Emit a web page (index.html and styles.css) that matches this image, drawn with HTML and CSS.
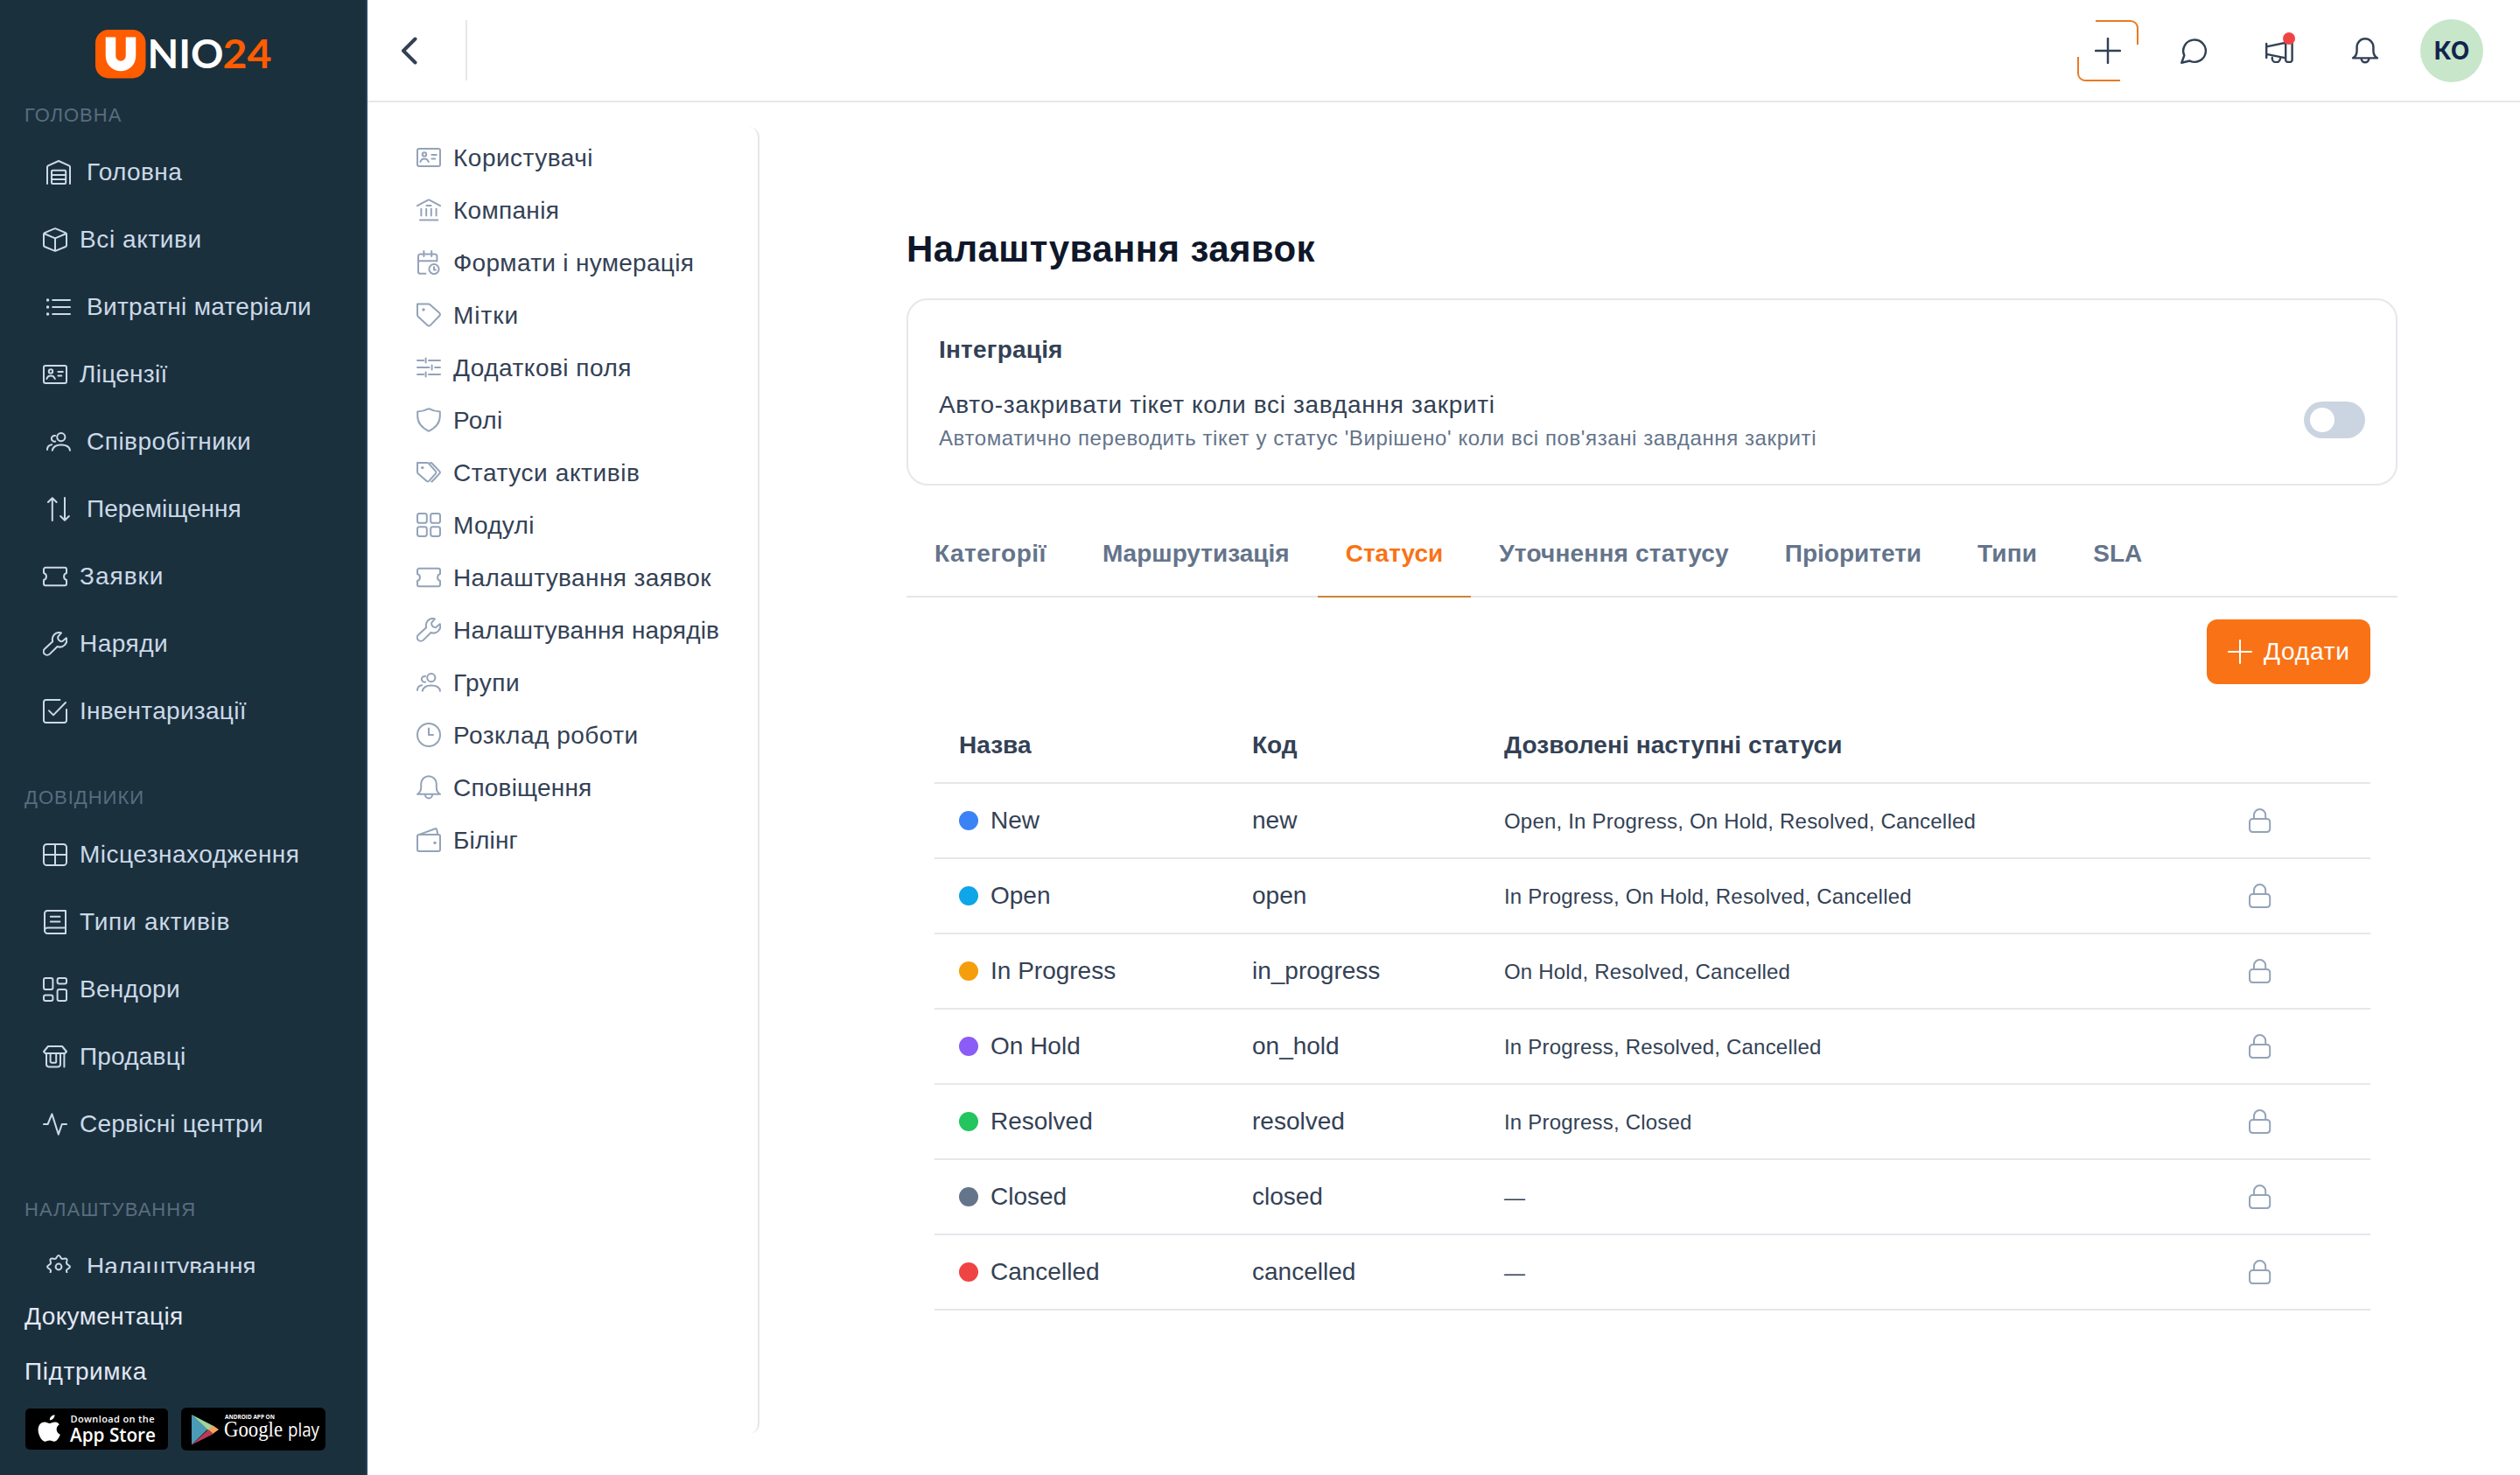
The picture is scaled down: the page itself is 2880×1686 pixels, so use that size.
FILE: index.html
```html
<!DOCTYPE html>
<html lang="uk">
<head>
<meta charset="utf-8">
<title>Налаштування заявок</title>
<link rel="stylesheet" href="styles.css">
</head>
<body>
<svg class="sprite" aria-hidden="true">
  <symbol id="warehouse" viewBox="0 0 14 14"><path d="M.5 13.5V4.1Q.5 3.5 1 3.2L7 .5l6 2.7q.5.3.5.9v9.4"/><rect x="3" y="5.9" width="8.1" height="7.6" rx=".6"/><path d="M3 8.5h8M3 11h8"/></symbol>
  <symbol id="box" viewBox="0 0 14 14"><path d="M7.4.7l5.6 2.4q.5.2.5.8v6.4q0 .5-.5.7l-5.6 2.3q-.4.2-.8 0L1 11q-.5-.2-.5-.7V3.9q0-.6.5-.8L6.6.7q.4-.2.8 0zM.7 3.5L7 6.2l6.3-2.7M7 6.2v7.1"/></symbol>
  <symbol id="list" viewBox="0 0 14 14"><path d="M3.6 3h9.9M3.6 7h9.9M3.6 11h9.9"/><path class="dots" d="M.8 3h.01M.8 7h.01M.8 11h.01"/></symbol>
  <symbol id="idcard" viewBox="0 0 14 14"><rect x=".5" y="2" width="13" height="10" rx="1"/><circle cx="4.5" cy="5.2" r="1.1"/><path d="M2.2 9.5q.5-1.8 2.3-1.8t2.4 1.8M8.7 5.5h2.7M8.7 7.8h1.9"/></symbol>
  <symbol id="users" viewBox="0 0 14 14"><circle cx="8.4" cy="4.3" r="2.3"/><path d="M3.4 11.9C3.8 9.8 5.5 8.7 8.4 8.7s4.8 1.1 5.1 3.2M5 3.5a1.7 1.7 0 1 0 .1 3.3M.5 11.5c0-1.7.9-2.6 2.6-2.9"/></symbol>
  <symbol id="arrows" viewBox="0 0 14 14"><path d="M3.4 13.5V.6M1 3L3.4.6 5.8 3M10.5.5v12.9M8.1 11l2.4 2.4 2.4-2.4"/></symbol>
  <symbol id="ticket" viewBox="0 0 14 14"><path d="M.5 5V2.9a1 1 0 0 1 1-1h11a1 1 0 0 1 1 1V5a2.1 2.1 0 0 0 0 4v2.1a1 1 0 0 1-1 1h-11a1 1 0 0 1-1-1V9a2.1 2.1 0 0 0 0-4z"/></symbol>
  <symbol id="wrench" viewBox="0 0 14 14"><path d="M10.5.7a3.9 3.9 0 0 0-4.9 4.9L1 9.9a2 2 0 0 0 2.9 2.9L8.3 8.5a3.9 3.9 0 0 0 5.1-4.9l-2.1 1.8q-1 .5-2-.4t-.6-2.2z"/></symbol>
  <symbol id="check" viewBox="0 0 14 14"><path d="M13.5 6v6.3a1.2 1.2 0 0 1-1.2 1.2H1.7a1.2 1.2 0 0 1-1.2-1.2V1.7A1.2 1.2 0 0 1 1.7.5h8M3.5 6.7L6 9.2l7-7.2"/></symbol>
  <symbol id="window" viewBox="0 0 14 14"><rect x=".5" y="1" width="13" height="12" rx="1.8"/><path d="M7 1v12M.5 7h13"/></symbol>
  <symbol id="book" viewBox="0 0 14 14"><path d="M13 13.5H2.6A1.6 1.6 0 0 1 1 11.9V2A1.5 1.5 0 0 1 2.5.5H13zM13 10.3H2.6A1.6 1.6 0 0 0 1 11.9M4.4 3.9h5.3M4.4 6.8h5.3"/></symbol>
  <symbol id="dashboard" viewBox="0 0 14 14"><rect x=".5" y=".5" width="5.2" height="6.5" rx="1"/><rect x="8.3" y=".5" width="5.2" height="3.3" rx="1"/><rect x=".5" y="10.2" width="5.2" height="3.3" rx="1"/><rect x="8.3" y="7" width="5.2" height="6.5" rx="1"/></symbol>
  <symbol id="store" viewBox="0 0 14 14"><path d="M3 1h8l2.500 3-.9 1H1.400L.5 4zM2 5v6.300a1.400 1.400 0 0 0 1.400 1.400h5.200a1.400 1.400 0 0 0 1.400-1.400V5M12.200 5v7.700M4.300 5v4.600a.8.8 0 0 0 .8.8h1.700a.8.8 0 0 0 .8-.8V5"/></symbol>
  <symbol id="pulse" viewBox="0 0 14 14"><path d="M.5 7h2.300L5.200 1.200l3.700 11.600L10.900 7h2.600"/></symbol>
  <symbol id="gear" viewBox="0 0 14 14"><g transform="translate(7 7)"><path d="M5.49-1.09Q7.5 0 5.49 1.09Q4.07 1.68 4.66 3.11Q5.2 5.2 3.11 4.66Q1.68 4.07 1.09 5.49Q0 7.5-1.09 5.49Q-1.68 4.07-3.11 4.66Q-5.2 5.2-4.66 3.11Q-4.07 1.68-5.49 1.09Q-7.5 0-5.49-1.09Q-4.07-1.68-4.66-3.11Q-5.2-5.2-3.11-4.66Q-1.68-4.07-1.09-5.49Q0-7.5 1.09-5.49Q1.68-4.07 3.11-4.66Q5.2-5.2 4.66-3.11Q4.07-1.68 5.49-1.09Z"/><circle r="1.7"/></g></symbol>
  <symbol id="bank" viewBox="0 0 14 14"><path d="M.5 4.6L6.6 1.3q.4-.2.8 0l6.1 3.3M5.7 4.500h2.6M2.7 6.400v3.8M5.6 6.400v3.8M8.400 6.400v3.8M11.300 6.400v3.8M2 12.800h10.200"/></symbol>
  <symbol id="calendar" viewBox="0 0 14 14"><path d="M5.200 13.400H2.200A1.200 1.200 0 0 1 1 12.200V3.400a1.200 1.200 0 0 1 1.200-1.200h8.300a1.200 1.200 0 0 1 1.200 1.200v2.800M1 6.100h10.700M4.200.5v3M8.600.5v3M10 9.600v1.600h1"/><circle cx="10" cy="10.800" r="2.800"/></symbol>
  <symbol id="tag" viewBox="0 0 14 14"><path d="M.5.7h6.300q.5 0 .8.3l5.400 4.800q.9.900 0 1.800l-5 5.200q-.9.900-1.900 0L1 8Q.5 7.600.5 7z"/><path class="dots" d="M4 4h.01"/></symbol>
  <symbol id="sliders" viewBox="0 0 14 14"><path d="M.5 3h3.600M7 3h6.500M5.300 1.700v2.600M.5 7h6.700M10.600 7h2.900M8.800 5.700v2.600M.5 11h3.600M7 11h6.500M5.300 9.700v2.600"/></symbol>
  <symbol id="shield" viewBox="0 0 14 14"><path d="M7 .6Q4 2.200.6 2.200v2.600q0 5.600 6.400 8.600 6.400-3 6.400-8.600V2.200Q10 2.200 7 .6z"/></symbol>
  <symbol id="tags" viewBox="0 0 14 14"><path d="M.5 1.500h5.700q.4 0 .7.300l3.900 4.400q.8.800 0 1.600l-3.600 4q-.8.800-1.600 0L1 7.800Q.5 7.300.5 6.700zM7.900 1.500q.6 0 1 .4l4.200 4.400q.7.700 0 1.400l-3.900 4.200q-.3.400-.7.300"/><path class="dots" d="M3.400 4.300h.01"/></symbol>
  <symbol id="modules" viewBox="0 0 14 14"><rect x=".5" y=".5" width="5.400" height="5.400" rx="1.200"/><rect x="8.100" y=".5" width="5.400" height="5.400" rx="1.200"/><rect x=".5" y="8.100" width="5.400" height="5.400" rx="1.200"/><rect x="8.100" y="8.100" width="5.400" height="5.400" rx="1.200"/></symbol>
  <symbol id="clock" viewBox="0 0 14 14"><circle cx="7" cy="7" r="6.500"/><path d="M7 3.300V7h2.500"/></symbol>
  <symbol id="bell" viewBox="0 0 14 14"><path d="M.5 10.900Q2.600 9.700 2.600 7V5a4.400 4.400 0 0 1 8.800 0v2q0 2.700 2.100 3.900zM5 11.200a2 2 0 0 0 4 0"/></symbol>
  <symbol id="wallet" viewBox="0 0 14 14"><rect x=".5" y="4" width="13" height="9.500" rx="1"/><path d="M2 3.800L10.700.6q.8-.2.9.5l.5 2.800"/><path class="dots" d="M10.500 8.700h.01"/></symbol>
  <symbol id="lock" viewBox="0 0 14 14"><rect x="1" y="6" width="11.600" height="7.500" rx="1.700"/><path d="M3.500 6V3.800a3.300 3.300 0 0 1 6.600 0V6"/></symbol>
  <symbol id="plus" viewBox="0 0 14 14"><path d="M7 .5v13M.5 7h13"/></symbol>
  <symbol id="chat" viewBox="0 0 14 14"><path d="M.6 13.400L2 9.500a6 5.900 0 1 1 2.900 2.900z"/></symbol>
  <symbol id="horn" viewBox="0 0 16 12"><path d="M.6 1v8M.6 2.700L11.600.4M.6 6.900l11 2.300M11.600 0v10.200a1.300 1.300 0 0 0 1.300 1.300h1.100a1.300 1.300 0 0 0 1.300-1.300V0M3.900 9a2.300 2.300 0 0 0 4.600.6"/></symbol>
</svg>

<div class="app">
  <aside class="sidebar">
    <div class="menu">
      <div class="logo">
        <svg width="210" height="60" viewBox="0 0 210 60">
          <rect x="4" y="2" width="57.5" height="55.5" rx="15" fill="#ff5c00"/>
          <path d="M21.5 10.5V32a11.5 11.5 0 0 0 23 0V10.5" fill="none" stroke="#fff" stroke-width="11.5"/>
          <text class="logo-text" x="63.5" y="46" textLength="87" lengthAdjust="spacingAndGlyphs" fill="#fff">NIO</text>
          <text class="logo-text" x="149.5" y="46" textLength="56" lengthAdjust="spacingAndGlyphs" fill="#ff5c00">24</text>
        </svg>
      </div>
      <h2 class="group">ГОЛОВНА</h2>
      <a class="item wide"><svg class="ic"><use href="#warehouse"/></svg><span class="ls-4">Головна</span></a>
      <a class="item"><svg class="ic"><use href="#box"/></svg><span class="ls-6">Всі активи</span></a>
      <a class="item wide"><svg class="ic"><use href="#list"/></svg><span class="ls-3">Витратні матеріали</span></a>
      <a class="item"><svg class="ic"><use href="#idcard"/></svg><span class="ls-3">Ліцензії</span></a>
      <a class="item wide"><svg class="ic"><use href="#users"/></svg><span class="ls-5">Співробітники</span></a>
      <a class="item wide"><svg class="ic"><use href="#arrows"/></svg><span>Переміщення</span></a>
      <a class="item"><svg class="ic"><use href="#ticket"/></svg><span class="ls-10">Заявки</span></a>
      <a class="item"><svg class="ic"><use href="#wrench"/></svg><span class="ls-5">Наряди</span></a>
      <a class="item"><svg class="ic"><use href="#check"/></svg><span class="ls-3">Інвентаризації</span></a>
      <h2 class="group">ДОВІДНИКИ</h2>
      <a class="item"><svg class="ic"><use href="#window"/></svg><span class="ls-5">Місцезнаходження</span></a>
      <a class="item"><svg class="ic"><use href="#book"/></svg><span class="ls-8">Типи активів</span></a>
      <a class="item"><svg class="ic"><use href="#dashboard"/></svg><span class="ls-3">Вендори</span></a>
      <a class="item"><svg class="ic"><use href="#store"/></svg><span class="ls-2">Продавці</span></a>
      <a class="item"><svg class="ic"><use href="#pulse"/></svg><span class="ls-2">Сервісні центри</span></a>
      <h2 class="group last">НАЛАШТУВАННЯ</h2>
      <a class="item wide"><svg class="ic"><use href="#gear"/></svg><span>Налаштування</span></a>
    </div>
    <div class="foot">
      <a class="foot-link"><span class="ls-4">Документація</span></a>
      <a class="foot-link"><span class="ls-6">Підтримка</span></a>
      <div class="stores">
        <svg width="163" height="47" viewBox="0 0 163 47">
          <rect width="163" height="47" rx="5" fill="#000"/>
          <path d="M33.5 7.2c.2 3.3-2.7 6.2-5.6 6.100-.3-3.100 2.500-6 5.600-6.100zM38.800 18.300c-4.700 3-3.900 9.300 1 11.500-1.300 3.700-3.900 7.900-6.900 7.900-2 0-2.900-1.200-5.200-1.200s-3.300 1.200-5.100 1.200c-3.600 0-8-7.300-8-13.300 0-5.600 3.600-8.900 7.300-8.900 2.400 0 4.200 1.400 5.800 1.400 1.500 0 3.600-1.600 6.600-1.500 1.900.1 3.600 1.100 4.500 2.900z" fill="#fff"/>
          <text class="badge-sm" x="51.5" y="15.5" textLength="96">Download on the</text>
          <text class="badge-lg" x="51" y="37.5" textLength="98" lengthAdjust="spacingAndGlyphs">App Store</text>
        </svg>
        <svg width="165" height="49" viewBox="0 0 165 49">
          <rect width="165" height="49" rx="6" fill="#000"/>
          <path d="M12 8v34.5L30 25z" fill="#4a9bb5"/>
          <path d="M12 8l25 13-6 5z" fill="#9fd3a0"/>
          <path d="M12 42.5L31 25l6 5z" fill="#b83a55"/>
          <path d="M31 25l5.500-4.500L43 25l-6.500 4.700z" fill="#f6a45c"/>
          <text class="badge-xs" x="50" y="12.5" textLength="57" lengthAdjust="spacingAndGlyphs">ANDROID APP ON</text>
          <text class="badge-serif" x="49" y="33" textLength="67" lengthAdjust="spacingAndGlyphs">Google</text>
          <text class="badge-play" x="122" y="33" textLength="36" lengthAdjust="spacingAndGlyphs">play</text>
        </svg>
      </div>
    </div>
  </aside>

  <div class="page">
    <header class="topbar">
      <svg class="back" width="20" height="32" viewBox="0 0 20 32"><path d="M16.5 2.5L3 16l13.500 13.500"/></svg>
      <div class="sep"></div>
      <div class="tools">
        <div class="add">
          <svg class="corners" width="70" height="70" viewBox="0 0 70 70"><path d="M21 1h40a8 8 0 0 1 8 8v19M1 42v19a8 8 0 0 0 8 8h40"/></svg>
          <svg class="ic tool"><use href="#plus"/></svg>
        </div>
        <svg class="ic tool chat"><use href="#chat"/></svg>
        <div class="horn">
          <svg class="ic tool"><use href="#horn"/></svg>
          <i class="notice"></i>
        </div>
        <svg class="ic tool bell"><use href="#bell"/></svg>
        <div class="avatar">КО</div>
      </div>
    </header>

    <div class="body">
      <nav class="settings">
        <a class="set"><svg class="ic"><use href="#idcard"/></svg><span class="ls-5">Користувачі</span></a>
        <a class="set"><svg class="ic"><use href="#bank"/></svg><span class="ls-3">Компанія</span></a>
        <a class="set"><svg class="ic"><use href="#calendar"/></svg><span class="ls-3">Формати і нумерація</span></a>
        <a class="set"><svg class="ic"><use href="#tag"/></svg><span class="ls-10">Мітки</span></a>
        <a class="set"><svg class="ic"><use href="#sliders"/></svg><span class="ls-5">Додаткові поля</span></a>
        <a class="set"><svg class="ic"><use href="#shield"/></svg><span class="ls-4">Ролі</span></a>
        <a class="set"><svg class="ic"><use href="#tags"/></svg><span class="ls-6">Статуси активів</span></a>
        <a class="set"><svg class="ic"><use href="#modules"/></svg><span class="ls-3">Модулі</span></a>
        <a class="set"><svg class="ic"><use href="#ticket"/></svg><span class="ls-4">Налаштування заявок</span></a>
        <a class="set"><svg class="ic"><use href="#wrench"/></svg><span class="ls-2">Налаштування нарядів</span></a>
        <a class="set"><svg class="ic"><use href="#users"/></svg><span class="ls-5">Групи</span></a>
        <a class="set"><svg class="ic"><use href="#clock"/></svg><span class="ls-5">Розклад роботи</span></a>
        <a class="set"><svg class="ic"><use href="#bell"/></svg><span class="ls-2">Сповіщення</span></a>
        <a class="set"><svg class="ic"><use href="#wallet"/></svg><span class="ls-2">Білінг</span></a>
      </nav>

      <main class="content">
        <h1 class="title">Налаштування заявок</h1>
        <section class="card">
          <h3 class="card-title">Інтеграція</h3>
          <div class="option">
            <div>
              <div class="option-name">Авто-закривати тікет коли всі завдання закриті</div>
              <div class="option-hint">Автоматично переводить тікет у статус 'Вирішено' коли всі пов'язані завдання закриті</div>
            </div>
            <div class="toggle"></div>
          </div>
        </section>
        <div class="tabs">
          <a class="tab ls-5">Категорії</a>
          <a class="tab">Маршрутизація</a>
          <a class="tab active">Статуси</a>
          <a class="tab ls-2">Уточнення статусу</a>
          <a class="tab">Пріоритети</a>
          <a class="tab ls-2">Типи</a>
          <a class="tab">SLA</a>
        </div>
        <div class="panel">
          <button class="primary"><svg class="ic"><use href="#plus"/></svg><span class="ls-8">Додати</span></button>
          <div class="table">
            <div class="row head"><span>Назва</span><span>Код</span><span class="ls-1">Дозволені наступні статуси</span></div>
            <div class="row"><span class="name"><i class="dot new"></i>New</span><span>new</span><span class="next">Open, In Progress, On Hold, Resolved, Cancelled</span><svg class="ic"><use href="#lock"/></svg></div>
            <div class="row"><span class="name"><i class="dot open"></i>Open</span><span>open</span><span class="next">In Progress, On Hold, Resolved, Cancelled</span><svg class="ic"><use href="#lock"/></svg></div>
            <div class="row"><span class="name"><i class="dot progress"></i>In Progress</span><span>in_progress</span><span class="next">On Hold, Resolved, Cancelled</span><svg class="ic"><use href="#lock"/></svg></div>
            <div class="row"><span class="name"><i class="dot hold"></i>On Hold</span><span>on_hold</span><span class="next">In Progress, Resolved, Cancelled</span><svg class="ic"><use href="#lock"/></svg></div>
            <div class="row"><span class="name"><i class="dot resolved"></i>Resolved</span><span>resolved</span><span class="next">In Progress, Closed</span><svg class="ic"><use href="#lock"/></svg></div>
            <div class="row"><span class="name"><i class="dot closed"></i>Closed</span><span>closed</span><span class="next">—</span><svg class="ic"><use href="#lock"/></svg></div>
            <div class="row"><span class="name"><i class="dot cancelled"></i>Cancelled</span><span>cancelled</span><span class="next">—</span><svg class="ic"><use href="#lock"/></svg></div>
          </div>
        </div>
      </main>
    </div>
  </div>
</div>
</body>
</html>
```
FILE: styles.css
```css
* { box-sizing: border-box; }
body { margin: 0; background: #fff; color: #334155; font: 28px/40px "Liberation Sans", Arial, sans-serif; }
h1, h2, h3 { margin: 0; }
.sprite { display: none; }
.ic { display: block; flex: none; width: 28px; height: 28px; fill: none; stroke: currentColor; stroke-width: 1; stroke-linecap: round; stroke-linejoin: round; overflow: visible; }
.dots { stroke-width: 1.7; }

/* letter-spacing steps, in tenths of a pixel */
.ls-1 { letter-spacing: 0.1px; }
.ls-2 { letter-spacing: 0.2px; }
.ls-3 { letter-spacing: 0.3px; }
.ls-4 { letter-spacing: 0.4px; }
.ls-5 { letter-spacing: 0.5px; }
.ls-6 { letter-spacing: 0.6px; }
.ls-8 { letter-spacing: 0.8px; }
.ls-10 { letter-spacing: 1px; }

.app { display: flex; height: 1686px; overflow: hidden; }

.sidebar { flex: none; width: 420px; background: #1b303d; border-right: 2px solid #2c435b; color: #cbd9e8; }
.menu { height: 1455px; overflow: hidden; }
.logo { height: 104px; padding: 32px 0 0 105px; }
.logo svg { display: block; }
.logo-text { font: 700 46px Lato, sans-serif; }
.group { height: 54px; padding-left: 28px; font-size: 22px; line-height: 56px; font-weight: 400; letter-spacing: 1px; color: #586d7f; }
.group.last { height: 53px; line-height: 54px; }
.item + .group { margin-top: 33px; }
.item { display: flex; align-items: center; gap: 14px; height: 77px; padding-left: 49px; }
.item.wide { gap: 18px; padding-left: 53px; }
.foot { padding: 18px 0 0 28px; color: #e2e8f5; }
.foot-link { display: flex; align-items: center; height: 63px; }
.stores { display: flex; align-items: center; gap: 15px; padding: 10px 0 0 1px; }
.badge-sm { font: 600 11px "Open Sans", sans-serif; fill: #fff; }
.badge-lg { font: 600 22px "Open Sans", sans-serif; fill: #fff; }
.badge-xs { font: 700 7px "Open Sans", sans-serif; fill: #fff; }
.badge-serif { font: 400 25px "Liberation Serif", serif; fill: #fff; }
.badge-play { font: 400 22px "Open Sans", sans-serif; fill: #fff; }

.page { flex: 1; display: flex; flex-direction: column; }
.topbar { display: flex; align-items: center; height: 117px; padding: 0 42px 0 38px; border-bottom: 2px solid #e5e7eb; }
.back { fill: none; stroke: #334155; stroke-width: 4; stroke-linecap: round; stroke-linejoin: round; }
.sep { width: 2px; height: 69px; margin-left: 54px; background: #e5e7eb; }
.tools { display: flex; align-items: center; margin-left: auto; color: #334155; }
.add { display: grid; place-items: center; width: 70px; height: 70px; }
.add > * { grid-area: 1 / 1; }
.corners { fill: none; stroke: #e97a24; stroke-width: 2; }
.tool { width: 30px; height: 30px; stroke-width: 1.15; }
.chat { margin-left: 48px; }
.horn { position: relative; margin-left: 67px; }
.horn .tool { width: 32px; height: 24px; margin-top: 4px; stroke-width: 1.2; }
.notice { position: absolute; left: 20px; top: -7px; width: 14px; height: 14px; border-radius: 50%; background: #ef4444; }
.bell { width: 32px; margin-left: 66px; }
.avatar { width: 72px; height: 72px; margin-left: 47px; border-radius: 50%; background: #c8e6c9; color: #12244d; font: 700 28px/72px Inter, sans-serif; text-align: center; }

.body { flex: 1; display: flex; }
.settings { flex: none; width: 448px; height: 1494px; margin-top: 28px; padding: 5px 0 0 56px; border-right: 2px solid #e5e7eb; border-radius: 0 12px 12px 0; }
.set { display: flex; align-items: center; gap: 14px; height: 60px; }
.set span { padding-top: 2px; }
.set .ic { color: #94a3b8; }

.content { width: 1704px; margin-left: 168px; padding-top: 138px; }
.title { height: 86px; font-size: 42px; line-height: 60px; font-weight: 700; letter-spacing: 0.4px; color: #0f172a; }
.card { height: 214px; padding: 34px 35px; border: 2px solid #e5e7eb; border-radius: 24px; }
.card-title { font-size: 28px; line-height: 46px; font-weight: 700; letter-spacing: 0.2px; }
.option { display: flex; align-items: center; justify-content: space-between; padding-top: 20px; }
.option-name { line-height: 40px; letter-spacing: 0.68px; }
.option-hint { font-size: 24px; line-height: 36px; letter-spacing: 0.6px; color: #64748b; }
.toggle { width: 70px; height: 42px; margin-bottom: 2px; padding: 7px; border-radius: 21px; background: #cbd5e1; }
.toggle::before { content: ""; display: block; width: 28px; height: 28px; border-radius: 50%; background: #fff; }
.tabs { display: flex; height: 128px; padding-top: 27px; border-bottom: 2px solid #e5e7eb; }
.tab { height: 101px; padding: 0 32px; line-height: 101px; font-weight: 700; color: #64748b; }
.tab.active { color: #f97316; border-bottom: 2px solid #cd8434; }
.panel { display: flex; flex-direction: column; padding: 25px 31px 0 32px; }
.primary { display: flex; align-items: center; align-self: flex-end; gap: 13px; width: 187px; height: 74px; padding: 0 0 0 24px; border: 0; border-radius: 12px; background: #f97316; color: #fff; font: inherit; }
.table { margin-top: 28px; }
.row { display: grid; grid-template-columns: 335px 288px 850px 1fr; align-items: center; height: 86px; padding-left: 28px; border-bottom: 2px solid #e5e7eb; }
.head { font-weight: 700; }
.row .ic { color: #94a3b8; }
.name { display: flex; align-items: center; gap: 14px; }
.next { padding-top: 2px; font-size: 24px; letter-spacing: 0.2px; }
.dot { width: 22px; height: 22px; border-radius: 50%; }
.dot.new { background: #3b82f6; }
.dot.open { background: #0ea5e9; }
.dot.progress { background: #f59e0b; }
.dot.hold { background: #8b5cf6; }
.dot.resolved { background: #22c55e; }
.dot.closed { background: #64748b; }
.dot.cancelled { background: #ef4444; }
```
